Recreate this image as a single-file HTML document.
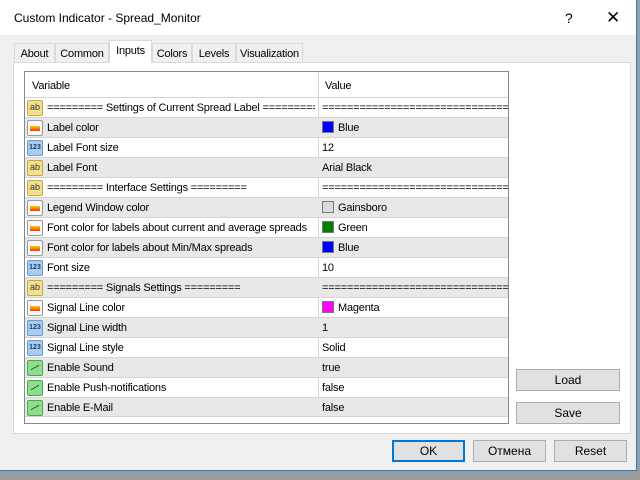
<!DOCTYPE html>
<html><head><style>
*{margin:0;padding:0;box-sizing:border-box}
body{width:640px;height:480px;background:#9c9c9c;font-family:"Liberation Sans",Arial,sans-serif;font-size:11px;letter-spacing:-0.2px;color:#000;position:relative;overflow:hidden}
.win{position:absolute;left:0;top:0;width:637px;height:471px;background:#f0f0f0;border-right:1px solid #1883d7;border-bottom:1px solid #1883d7}
.title{position:absolute;left:0;top:0;width:636px;height:35px;background:#fff}
.title .t{position:absolute;left:14px;top:11px;font-size:12px;letter-spacing:0}
.q{position:absolute;left:565px;top:10px;font-size:14px}
.x{position:absolute;left:606px;top:8px;font-size:17px;font-weight:normal}
.tab{position:absolute;top:43px;height:19px;border:1px solid #d9d9d9;border-bottom:none;background:#f0f0f0;padding:4px 0 0 0;text-align:center;font-size:11px}
.tab.a{top:40px;height:23px;background:#fff;border-color:#d9d9d9;padding-top:4px}
.panel{position:absolute;left:13px;top:62px;width:618px;height:372px;background:#fff;border:1px solid #d9d9d9}
.tbl{position:absolute;left:24px;top:71px;width:485px;height:353px;border:1px solid #828790;background:#fff;overflow:hidden}
.hdr{position:absolute;left:0;top:0;width:483px;height:25px}
.hdr span{position:absolute;top:8px}
.row{position:absolute;left:0;width:483px;height:20px;border-top:1px solid #d4d4d4}
.row.g{background:#e8e8e8}
.row .n{position:absolute;left:22px;top:4px;width:268px;overflow:hidden;white-space:nowrap}
.row .v{position:absolute;left:297px;top:4px;white-space:nowrap}
.row .sw{display:inline-block;width:12px;height:12px;border:1px solid #777;vertical-align:-2px;margin-right:4px}
.vline{position:absolute;left:293px;top:0;width:1px;height:345px;background:#d4d4d4}
.ic{position:absolute;left:2px;top:2px;width:16px;height:16px;border-radius:2px;letter-spacing:0}
.ab{background:#f3e08a;border:1px solid #c5a84a;font-size:9px;line-height:13px;text-align:center;color:#333}
.cl{background:#f8f8f8;border:1px solid #999}
.cl::after{content:"";position:absolute;left:2px;top:5px;width:10px;height:5px;background:linear-gradient(#ffcc00,#ff3300)}
.nm{background:#a9cdf0;border:1px solid #6a9ccc;font-size:7px;line-height:14px;text-align:center;color:#1a3d6a;font-weight:bold}
.bl{background:#8fdc8f;border:1px solid #4aa84a}
.bl::after{content:"";position:absolute;left:3px;top:6px;width:8px;height:3px;border-top:1px solid #135a13;transform:skewY(-30deg)}
.btn{position:absolute;height:22px;background:#e1e1e1;border:1px solid #adadad;text-align:center;line-height:20px;font-size:12px;letter-spacing:0}
</style></head><body>
<div class="win">
<div class="title"><span class="t">Custom Indicator - Spread_Monitor</span><span class="q">?</span><span class="x">✕</span></div>
<div class="panel"></div>
<div class="tab" style="left:14px;width:41px">About</div>
<div class="tab" style="left:55px;width:54px">Common</div>
<div class="tab" style="left:152px;width:40px">Colors</div>
<div class="tab" style="left:192px;width:44px">Levels</div>
<div class="tab" style="left:236px;width:67px">Visualization</div>
<div class="tab a" style="left:109px;width:43px">Inputs</div>
<div class="tbl">
<div class="hdr"><span style="left:7px">Variable</span><span style="left:300px">Value</span></div>
<div class="vline"></div>
<div class="row" style="top:25px"><div class="ic ab">ab</div><span class="n">========= Settings of Current Spread Label =========</span><span class="v">==================================</span></div>
<div class="row g" style="top:45px"><div class="ic cl"></div><span class="n">Label color</span><span class="v" style="top:3px"><i class="sw" style="background:#00f"></i>Blue</span></div>
<div class="row" style="top:65px"><div class="ic nm">123</div><span class="n">Label Font size</span><span class="v">12</span></div>
<div class="row g" style="top:85px"><div class="ic ab">ab</div><span class="n">Label Font</span><span class="v">Arial Black</span></div>
<div class="row" style="top:105px"><div class="ic ab">ab</div><span class="n">========= Interface Settings =========</span><span class="v">==================================</span></div>
<div class="row g" style="top:125px"><div class="ic cl"></div><span class="n">Legend Window color</span><span class="v" style="top:3px"><i class="sw" style="background:#dcdcdc"></i>Gainsboro</span></div>
<div class="row" style="top:145px"><div class="ic cl"></div><span class="n">Font color for labels about current and average spreads</span><span class="v" style="top:3px"><i class="sw" style="background:#008000"></i>Green</span></div>
<div class="row g" style="top:165px"><div class="ic cl"></div><span class="n">Font color for labels about Min/Max spreads</span><span class="v" style="top:3px"><i class="sw" style="background:#00f"></i>Blue</span></div>
<div class="row" style="top:185px"><div class="ic nm">123</div><span class="n">Font size</span><span class="v">10</span></div>
<div class="row g" style="top:205px"><div class="ic ab">ab</div><span class="n">========= Signals Settings =========</span><span class="v">==================================</span></div>
<div class="row" style="top:225px"><div class="ic cl"></div><span class="n">Signal Line color</span><span class="v" style="top:3px"><i class="sw" style="background:#f0f"></i>Magenta</span></div>
<div class="row g" style="top:245px"><div class="ic nm">123</div><span class="n">Signal Line width</span><span class="v">1</span></div>
<div class="row" style="top:265px"><div class="ic nm">123</div><span class="n">Signal Line style</span><span class="v">Solid</span></div>
<div class="row g" style="top:285px"><div class="ic bl"></div><span class="n">Enable Sound</span><span class="v">true</span></div>
<div class="row" style="top:305px"><div class="ic bl"></div><span class="n">Enable Push-notifications</span><span class="v">false</span></div>
<div class="row g" style="top:325px;border-bottom:1px solid #d4d4d4"><div class="ic bl"></div><span class="n">Enable E-Mail</span><span class="v">false</span></div>
</div>
<div class="btn" style="left:516px;top:369px;width:104px">Load</div>
<div class="btn" style="left:516px;top:402px;width:104px">Save</div>
<div class="btn" style="left:392px;top:440px;width:73px;border:2px solid #0078d7;line-height:18px">OK</div>
<div class="btn" style="left:473px;top:440px;width:73px">Отмена</div>
<div class="btn" style="left:554px;top:440px;width:73px">Reset</div>
</div>
</body></html>
